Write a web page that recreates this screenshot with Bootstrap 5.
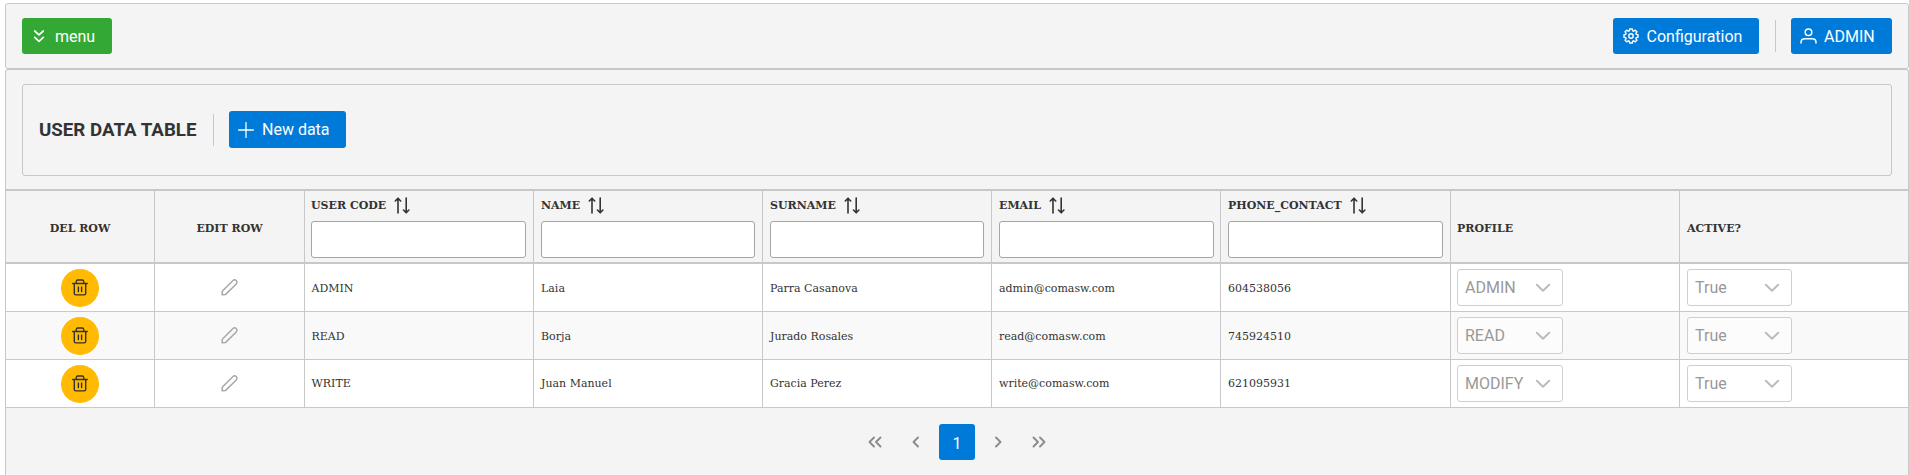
<!DOCTYPE html>
<html lang="en">
<head>
<meta charset="utf-8">
<meta name="viewport" content="width=device-width, initial-scale=1">
<title>User data table</title>
<link href="https://cdn.jsdelivr.net/npm/bootstrap@5.3.0/dist/css/bootstrap.min.css" rel="stylesheet">
<style>
:root{--line:#c8c8c8;--panel:#f4f4f4;--blue:#007ad9}
body{font-family:Roboto,sans-serif;font-size:16px;color:#333;background:#fff;padding:3px 0 0 5px;overflow:hidden}
svg{display:block;flex:none;fill:none;stroke:currentColor;stroke-linecap:round;stroke-linejoin:round}
.topbar{height:66px;background:var(--panel);border:1px solid var(--line);border-radius:3px;padding:0 16px}
.page-panel{height:420px;background:var(--panel);border:1px solid var(--line);border-bottom:0;border-radius:3px 3px 0 0}
.table-head{padding:14px 16px 13px;height:120px;border-bottom:1px solid var(--line)}
.title-bar{height:92px;border:1px solid var(--line);border-radius:3px;padding:0 16px 1px}
.title-bar h1{font-size:18.72px;font-weight:700;width:158px;line-height:24px;white-space:nowrap}
.btn-tool{--bs-btn-color:#fff;--bs-btn-bg:var(--blue);--bs-btn-border-color:var(--blue);--bs-btn-hover-color:#fff;--bs-btn-hover-bg:#116fbf;--bs-btn-padding-x:0;--bs-btn-padding-y:0;--bs-btn-border-radius:3px;--bs-btn-border-width:0;height:36px;line-height:24px;display:flex;align-items:center;white-space:nowrap}
.topbar .btn-tool span{padding-top:2px}
.btn-menu{--bs-btn-bg:#34a835;--bs-btn-hover-bg:#107d11;width:90px;padding-left:9px}
.btn-tool svg{margin-right:8px}
.btn-config{width:146px;padding-left:10px}
.btn-config svg{margin-right:7.500px}
.btn-user{width:101px;padding-left:9px}
.btn-user svg{margin-right:7px}
.btn-new{width:117px;height:37px;padding-left:9px;margin-left:-1px}
.divider{width:1px;height:32px;background:var(--line)}
.topbar .divider{margin:0 -1px 0 0}
.user-table{width:1904px;margin-left:-1px;margin-right:-1px;table-layout:fixed;border-collapse:separate;border-spacing:0;font:11px/15px "DejaVu Serif",serif;color:#333}
.user-table th,.user-table td{border:solid var(--line);border-width:1px 0 0 1px;padding:0 7px;vertical-align:middle}
.user-table tr>:nth-child(3),.user-table tr>:nth-child(8){padding-left:6px}
.user-table td:nth-child(3){padding-left:6.500px}
.user-table tr>:nth-child(6){padding-right:6px}
.user-table tr>:last-child{border-right-width:1px}
.user-table th{height:73px;border-bottom-width:1px;font-weight:700;padding-top:2px}
.user-table th.plain{padding-top:4px}
.user-table td{height:48px;background:#fff}
.user-table td:nth-child(n+3):nth-child(-n+7){padding-top:1px;padding-bottom:0}
.user-table tr:last-child td:nth-child(n+3):nth-child(-n+7){padding-top:0;padding-bottom:1px}
.user-table tr:nth-child(even) td{background:#f9f9f9}
.filter{height:37px;border:1px solid #a6a6a6;border-radius:3px;margin-top:7px;padding:0 6px}
.sort-label{height:17px;gap:8px}
.btn-trash{width:38px;height:38px;border-radius:50%;background:#ffba01;color:#333;border:0;padding:0}
.pencil{color:#a8a8a8}
.choice{height:37px;border:1px solid #cfcfcf;border-radius:3px;background:#fff;font:16px/35px Roboto,sans-serif;color:#999;padding:0 11px 0 7px}
.choice svg{color:#bcbcbc}
tr:nth-child(even) .choice{background:#fcfcfc}
.choice-profile{width:106px}.choice-active{width:105px}
.pager{border-top:1px solid var(--line);padding-top:16px;color:#8b8b8b;gap:5px}
.pager span{width:36px;height:36px}
.pager .current{background:var(--blue);color:#fff;border-radius:3px;padding-top:3px}
</style>
</head>
<body>
<svg class="d-none">
  <symbol id="down2" viewBox="0 0 16 16"><path d="M3.700 3l4.300 3.900L12.300 3M3.700 9.400L8 13.300l4.300-3.900"/></symbol>
  <symbol id="plus" viewBox="0 0 16 16"><path d="M8 .6v14.800M.6 8h14.800"/></symbol>
  <symbol id="cog" viewBox="0 0 16 16"><circle cx="8" cy="8" r="2.200"/><path d="M6.700 1h2.600l.4 1.800 1 .4 1.600-1 1.600 1.600-1 1.600.4 1 1.700.4v2.400l-1.700.4-.4 1 1 1.600-1.600 1.600-1.600-1-1 .4-.4 1.800H6.700l-.4-1.800-1-.4-1.600 1-1.600-1.600 1-1.600-.4-1L1 9.200V6.800l1.700-.4.4-1-1-1.600 1.600-1.600 1.600 1 1-.4z"/></symbol>
  <symbol id="user" viewBox="0 0 17 16"><circle cx="8.500" cy="4.200" r="3.300"/><path d="M1 15v-.8c0-2.200 1.700-3.500 4-3.500h7c2.300 0 4 1.300 4 3.500v.8"/></symbol>
  <symbol id="trash" viewBox="0 0 16 17"><path d="M.7 4.500h14.600M2.300 4.500v10c0 .9.600 1.400 1.400 1.400h8.600c.8 0 1.400-.5 1.400-1.400v-10M4.300 4.500V2.500c0-.9.600-1.500 1.400-1.500h4.600c.8 0 1.400.6 1.400 1.500v2M6.400 8v4.500M9.600 8v4.500"/></symbol>
  <symbol id="pencil" viewBox="0 0 17 17"><path d="M1.200 15.800v-3.500L11.800 1.700c1-1 2.500-1 3.400-.1 1 .9.900 2.400 0 3.400L4.700 15.400z"/></symbol>
  <symbol id="sort" viewBox="0 0 16 17"><path d="M4 16V1.200M1.300 4L4 1.200 6.700 4M12.200 1v14.800M9.500 13l2.700 2.800 2.700-2.800"/></symbol>
  <symbol id="chev" viewBox="0 0 16 10"><path d="M1.800 1.800L8 7.700l6.200-5.900"/></symbol>
</svg>

<header class="topbar d-flex align-items-center justify-content-between">
  <button class="btn btn-tool btn-menu"><svg width="16" height="16" stroke-width="1.700"><use href="#down2"/></svg><span>menu</span></button>
  <div class="d-flex align-items-center gap-3">
    <button class="btn btn-tool btn-config"><svg width="16" height="16" stroke-width="1.400"><use href="#cog"/></svg><span>Configuration</span></button>
    <div class="divider"></div>
    <button class="btn btn-tool btn-user"><svg width="17" height="16" stroke-width="1.500"><use href="#user"/></svg><span>ADMIN</span></button>
  </div>
</header>

<main class="page-panel">
  <div class="table-head">
    <div class="title-bar d-flex align-items-center gap-3">
      <h1 class="mb-0">USER DATA TABLE</h1>
      <div class="divider"></div>
      <button class="btn btn-tool btn-new"><svg width="16" height="16" stroke-width="1.300"><use href="#plus"/></svg><span>New data</span></button>
    </div>
  </div>
  <table class="user-table">
    <colgroup><col style="width:149px"><col style="width:150px"><col style="width:229px"><col style="width:229px"><col style="width:229px"><col style="width:229px"><col style="width:230px"><col style="width:229px"><col style="width:230px"></colgroup>
    <thead>
      <tr>
        <th class="plain text-center">DEL ROW</th>
        <th class="plain text-center">EDIT ROW</th>
        <th><div class="sort-label d-flex align-items-center">USER CODE<svg width="16" height="17" stroke-width="1.600"><use href="#sort"/></svg></div><input class="filter d-block w-100" aria-label="User code"></th>
        <th><div class="sort-label d-flex align-items-center">NAME<svg width="16" height="17" stroke-width="1.600"><use href="#sort"/></svg></div><input class="filter d-block w-100" aria-label="Name"></th>
        <th><div class="sort-label d-flex align-items-center">SURNAME<svg width="16" height="17" stroke-width="1.600"><use href="#sort"/></svg></div><input class="filter d-block w-100" aria-label="Surname"></th>
        <th><div class="sort-label d-flex align-items-center">EMAIL<svg width="16" height="17" stroke-width="1.600"><use href="#sort"/></svg></div><input class="filter d-block w-100" aria-label="Email"></th>
        <th><div class="sort-label d-flex align-items-center">PHONE_CONTACT<svg width="16" height="17" stroke-width="1.600"><use href="#sort"/></svg></div><input class="filter d-block w-100" aria-label="Phone"></th>
        <th class="plain">PROFILE</th>
        <th class="plain">ACTIVE?</th>
      </tr>
    </thead>
    <tbody>
      <tr>
        <td><button class="btn btn-trash d-flex align-items-center justify-content-center mx-auto"><svg width="16" height="17" stroke-width="1.400"><use href="#trash"/></svg></button></td>
        <td><svg class="pencil mx-auto" width="17" height="17" stroke-width="1.500"><use href="#pencil"/></svg></td>
        <td>ADMIN</td><td>Laia</td><td>Parra Casanova</td><td>admin@comasw.com</td><td>604538056</td>
        <td><div class="choice choice-profile d-flex align-items-center justify-content-between">ADMIN<svg width="16" height="10" stroke-width="2"><use href="#chev"/></svg></div></td>
        <td><div class="choice choice-active d-flex align-items-center justify-content-between">True<svg width="16" height="10" stroke-width="2"><use href="#chev"/></svg></div></td>
      </tr>
      <tr>
        <td><button class="btn btn-trash d-flex align-items-center justify-content-center mx-auto"><svg width="16" height="17" stroke-width="1.400"><use href="#trash"/></svg></button></td>
        <td><svg class="pencil mx-auto" width="17" height="17" stroke-width="1.500"><use href="#pencil"/></svg></td>
        <td>READ</td><td>Borja</td><td>Jurado Rosales</td><td>read@comasw.com</td><td>745924510</td>
        <td><div class="choice choice-profile d-flex align-items-center justify-content-between">READ<svg width="16" height="10" stroke-width="2"><use href="#chev"/></svg></div></td>
        <td><div class="choice choice-active d-flex align-items-center justify-content-between">True<svg width="16" height="10" stroke-width="2"><use href="#chev"/></svg></div></td>
      </tr>
      <tr>
        <td><button class="btn btn-trash d-flex align-items-center justify-content-center mx-auto"><svg width="16" height="17" stroke-width="1.400"><use href="#trash"/></svg></button></td>
        <td><svg class="pencil mx-auto" width="17" height="17" stroke-width="1.500"><use href="#pencil"/></svg></td>
        <td>WRITE</td><td>Juan Manuel</td><td>Gracia Perez</td><td>write@comasw.com</td><td>621095931</td>
        <td><div class="choice choice-profile d-flex align-items-center justify-content-between">MODIFY<svg width="16" height="10" stroke-width="2"><use href="#chev"/></svg></div></td>
        <td><div class="choice choice-active d-flex align-items-center justify-content-between">True<svg width="16" height="10" stroke-width="2"><use href="#chev"/></svg></div></td>
      </tr>
    </tbody>
  </table>
  <nav class="pager d-flex justify-content-center" aria-label="Pages">
    <span class="d-flex align-items-center justify-content-center"><svg width="14" height="12" stroke-width="1.900"><path d="M6 1.500L1.500 6 6 10.500M12.500 1.500L8 6l4.500 4.500"/></svg></span>
    <span class="d-flex align-items-center justify-content-center"><svg width="8" height="12" stroke-width="1.900"><path d="M6 1.500L1.500 6 6 10.500"/></svg></span>
    <span class="current d-flex align-items-center justify-content-center">1</span>
    <span class="d-flex align-items-center justify-content-center"><svg width="8" height="12" stroke-width="1.900"><path d="M2 1.500L6.500 6 2 10.500"/></svg></span>
    <span class="d-flex align-items-center justify-content-center"><svg width="14" height="12" stroke-width="1.900"><path d="M1.500 1.500L6 6 1.500 10.500M8 1.500L12.500 6 8 10.500"/></svg></span>
  </nav>
</main>
<script src="https://cdn.jsdelivr.net/npm/bootstrap@5.3.0/dist/js/bootstrap.bundle.min.js"></script>
</body>
</html>
